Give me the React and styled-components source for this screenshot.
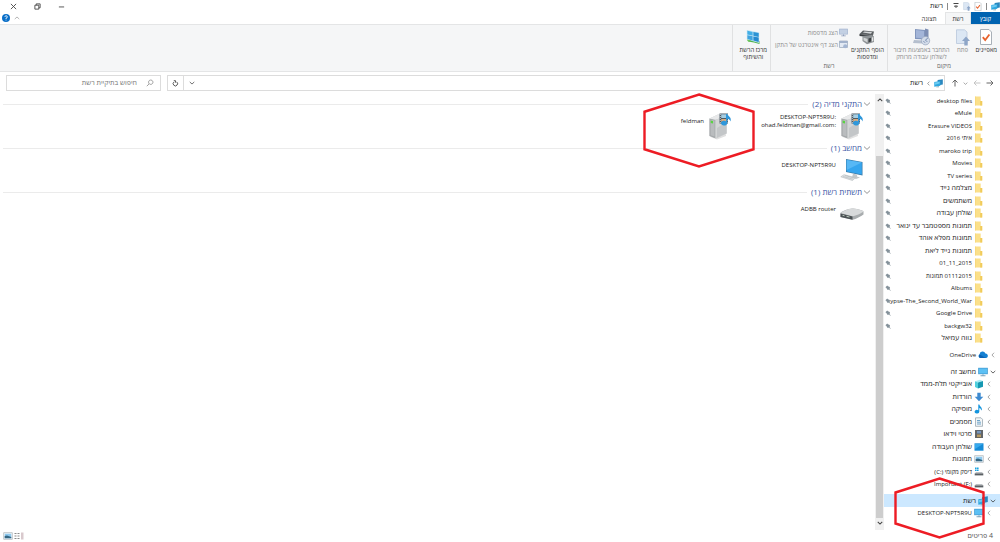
import React from 'react';
import styled, { createGlobalStyle } from 'styled-components';

const GlobalStyle = createGlobalStyle`
  * {
    box-sizing: border-box;
  }
  body {
    margin: 0;
    background: #fff;
    color: #222;
    font-family: 'Open Sans', 'Noto Sans', 'DejaVu Sans', sans-serif;
    font-size: 7px;
    line-height: 8px;
  }
  button, input {
    font: inherit;
    color: inherit;
    background: none;
    border: none;
    padding: 0;
    margin: 0;
  }
  svg {
    display: block;
    flex: none;
  }
`;

const Window = styled.div`
  display: flex;
  flex-direction: column;
  min-height: 100vh;
  overflow: hidden;
`;

const TitleBar = styled.header`
  display: flex;
  align-items: center;
  justify-content: space-between;
  height: 12px;
  padding-left: 8px;
`;

const QuickAccess = styled.div`
  display: flex;
  align-items: center;
  gap: 2px;
`;

const Divider = styled.span`
  width: 1px;
  height: 7px;
  margin: 0 2px;
  background: #8a8a8a;
`;

const WindowButtons = styled.div`
  display: flex;
  flex-direction: row-reverse;
  gap: 14px;
`;

const IconButton = styled.button`
  display: flex;
  align-items: center;
  justify-content: center;
  width: ${props => props.$width || 10}px;
  color: ${props => props.$color || '#444'};
`;

const TabBar = styled.nav`
  display: flex;
  align-items: stretch;
  height: 12px;
  font-size: 6px;
`;

const Tab = styled.button`
  width: ${props => (props.$file ? 29 : 26)}px;
  color: ${props => (props.$file ? '#fff' : '#333')};
  background: ${props => (props.$file ? '#0063b1' : props.$active ? '#f5f6f7' : 'none')};
  border: 1px solid ${props => (props.$file ? '#0063b1' : props.$active ? '#e4e5e6' : 'transparent')};
  border-bottom: none;
  margin-left: ${props => (props.$active ? 3 : 0)}px;
`;

const TabTools = styled.div`
  display: flex;
  align-items: center;
  gap: 2px;
  margin-right: auto;
  padding-left: 1px;
`;

const Ribbon = styled.section`
  display: flex;
  height: 48px;
  font-size: 6px;
  background: #f5f6f7;
  border-top: 1px solid #e4e5e6;
  border-bottom: 1px solid #e4e5e6;
`;

const Group = styled.div`
  display: flex;
  flex-direction: column;
  justify-content: space-between;
  width: ${props => props.$width}px;
  padding: 3px 3px 1px;
  border-left: 1px solid #e0e1e2;
`;

const GroupBody = styled.div`
  display: flex;
  align-items: flex-start;
  justify-content: flex-start;
  gap: 5px;
`;

const GroupLabel = styled.div`
  text-align: center;
  color: #666;
`;

const BigButton = styled.button`
  display: flex;
  flex-direction: column;
  align-items: center;
  gap: 1px;
  line-height: 7px;
  white-space: nowrap;
  color: ${props => (props.$muted ? '#8b8b8b' : '#333')};
`;

const BigIcon = styled.span`
  display: flex;
  align-items: center;
  height: 18px;
`;

const SmallButtons = styled.div`
  display: flex;
  flex-direction: column;
  gap: 3px;
  margin-right: -2px;
`;

const SmallButton = styled.button`
  display: flex;
  align-items: center;
  gap: 1px;
  white-space: nowrap;
  color: #8b8b8b;
`;

const AddressBar = styled.div`
  display: flex;
  align-items: center;
  gap: 6px;
  height: 22px;
  padding: 0 5px 0 6px;
`;

const Arrows = styled.div`
  display: flex;
  align-items: center;
  gap: 4px;
  width: 44px;
`;

const Address = styled.div`
  flex: 1;
  display: flex;
  align-items: center;
  gap: 3px;
  height: 16px;
  padding-right: 1px;
  border: 1px solid #dcdcdc;
`;

const AddressTools = styled.div`
  display: flex;
  align-self: stretch;
  margin-right: auto;

  button + button {
    border-right: 1px solid #dcdcdc;
  }
`;

const SearchBox = styled.label`
  display: flex;
  align-items: center;
  gap: 9px;
  width: 155px;
  height: 16px;
  padding: 0 6px;
  color: #8a8a8a;
  border: 1px solid #dcdcdc;

  input {
    flex: 1;
    min-width: 0;
    outline: none;
  }
  input::placeholder {
    color: #777;
    opacity: 1;
  }
`;

const Main = styled.div`
  flex: 1;
  display: flex;
`;

const Tree = styled.nav`
  width: 116px;
`;

const Branch = styled.ul`
  list-style: none;
  margin: 0 0 4px;
  padding: 0;
`;

const Row = styled.li`
  position: relative;
  height: 12px;
  background: ${props => (props.$selected ? '#cce8ff' : 'none')};

  &:nth-child(odd) {
    height: 13px;
  }
`;

const RowLink = styled.a`
  display: flex;
  align-items: center;
  gap: 2px;
  height: 100%;
  padding: 0 ${props => (props.$root ? 4 : 8)}px 0 1px;
  color: #222;
  text-decoration: none;
`;

const Slot = styled.span`
  display: flex;
  justify-content: center;
  width: ${props => props.$width}px;
`;

const Label = styled.span`
  flex: 1;
  min-width: 0;
  font-size: ${props => (props.$latin ? 6 : 7)}px;
  white-space: nowrap;
`;

const ScrollBar = styled.div`
  display: flex;
  flex-direction: column;
  align-items: stretch;
  width: 9px;
  padding: 1px 1px 2px;
  background: #f0f0f0;

  button {
    height: 10px;
  }
`;

const Track = styled.div`
  flex: 1;
  display: grid;
  grid-template-rows: 51fr 360fr;
`;

const Thumb = styled.div`
  grid-row: 2;
  background: #cdcdcd;
`;

const Content = styled.main`
  flex: 1;
  padding: 4px 4px 0 3px;
`;

const Section = styled.section`
  min-height: 44px;
`;

const SectionTitle = styled.h2`
  display: flex;
  align-items: center;
  gap: 1px;
  margin: 0;
  font-size: 8px;
  font-weight: 400;
  line-height: 12px;
  color: #3b55a5;

  &::after {
    content: '';
    flex: 1;
    height: 1px;
    margin-right: 3px;
    background: #ebebeb;
  }
`;

const Items = styled.div`
  display: flex;
  padding-right: 7px;
`;

const Item = styled.a`
  position: relative;
  display: flex;
  gap: 4px;
  width: 132px;
  height: 32px;
  color: #222;
  text-decoration: none;
`;

const ItemIcon = styled.span`
  display: flex;
  align-items: center;
  height: 32px;
`;

const ItemText = styled.span`
  display: flex;
  flex-direction: column;
  justify-content: center;
  height: 22px;
  font-size: 6px;
  white-space: nowrap;
`;

const StatusBar = styled.footer`
  display: flex;
  align-items: center;
  justify-content: space-between;
  height: 12px;
  padding: 0 7px 0 4px;
  color: #555;
`;

const ViewButtons = styled.div`
  display: flex;
  flex-direction: row-reverse;
  gap: 2px;
`;

// red markers drawn over the window
const Marker = styled.svg`
  position: absolute;
  z-index: 1;
  pointer-events: none;
  top: ${props => props.$top}px;
  right: ${props => props.$right}px;
`;

const Hexagon = ({ width, height, top, right }) => (
  <Marker $top={top} $right={right} width={width} height={height} viewBox={`0 0 ${width} ${height}`}>
    <path
      d={`M${width / 2} 1.5L${width - 1.5} ${height / 4}V${height * 0.75}L${width / 2} ${height - 1.5}L1.5 ${height * 0.75}V${height / 4}Z`}
      fill="none"
      stroke="#ed1c24"
      strokeWidth="2.4"
    />
  </Marker>
);

const Line = ({ d, size = 8, color = 'currentColor', weight = 1 }) => (
  <svg width={size} height={size} viewBox="0 0 8 8" fill="none" stroke={color} strokeWidth={weight}>
    <path d={d} />
  </svg>
);

const CHEVRON_LEFT = 'M5.4 1L2.6 4L5.4 7';
const CHEVRON_DOWN = 'M1 2.6L4 5.4L7 2.6';
const CHEVRON_UP = 'M1 5.4L4 2.6L7 5.4';

const NetworkIcon = ({ size = 10 }) => (
  <svg width={size} height={size} viewBox="0 0 10 10">
    <path d="M4 1.2L9.8 .3V6L4 7.2Z" fill="#2a86bd" />
    <path d="M.3 3.2L7 2.2V7.5L.3 8.7Z" fill="#2fa8e0" />
    <path d="M1 3.9L6.3 3.1V5L1 6.4Z" fill="#6ccbf2" />
    <path d="M2.5 8.5L5.5 8V9.3H2.5Z" fill="#7d98a7" />
  </svg>
);

const FolderIcon = () => (
  <svg width="9" height="10" viewBox="0 0 9 10">
    <path d="M1 .5H6.7V5H8.2V9.5H1Z" fill="#fbe08a" />
    <path d="M6.2 5H8.2V9.5H6.2Z" fill="#f1cb5a" />
    <path d="M1 .5H1.7V9.5H1Z" fill="#f5d678" />
  </svg>
);

const PinIcon = () => (
  <svg width="6" height="6" viewBox="0 0 6 6">
    <path d="M.4 2.2L2.2 .4L3 1.3L4.8 2L5 3.3L4.4 4L5.8 5.4L5.4 5.8L3.8 4.4L3 5L2.2 4.4L1.4 3Z" fill="#84919a" />
  </svg>
);

const CheckDoc = ({ width = 9, height = 10 }) => (
  <svg width={width} height={height} viewBox="0 0 12 16">
    <path d="M.5 .5H9L11.5 3V15.5H.5Z" fill="#fff" stroke="#a8b0b8" />
    <path d="M2.8 8.2L5.2 11L9.4 5.5" fill="none" stroke="#e8622c" strokeWidth="1.8" />
  </svg>
);

const OpenIcon = ({ width = 16, height = 17 }) => (
  <svg width={width} height={height} viewBox="0 0 15 17">
    <path d="M1 .8H9L11.5 3V14.5H1Z" fill="#dce7f4" stroke="#b7c7dc" strokeWidth=".8" />
    <path d="M10.5 7.5L14.5 12H12.2V16.5H8.8V12H6.5Z" fill="#8ea6c8" />
  </svg>
);

const RemoteIcon = () => (
  <svg width="18" height="18" viewBox="0 0 18 18">
    <path d="M2 1L12 2V11.5L2 11Z" fill="#8296bd" />
    <path d="M3 2L11 3V10.2L3 9.8Z" fill="#a3b5d8" />
    <path d="M12 .5L15.5 1.5V13H12Z" fill="#7e8fb4" />
    <path d="M1 12L10 12.5L9 15.5L0 15Z" fill="#b5bfce" />
    <circle cx="12.5" cy="12.7" r="4.2" fill="#d3dce9" stroke="#96a5bd" strokeWidth=".7" />
    <path d="M10.5 13.2L12 14.7M12.4 12L14.7 10.3M12.6 12.2L14.2 13.8" stroke="#7187ad" strokeWidth="1" />
  </svg>
);

const PrinterIcon = () => (
  <svg width="16" height="16" viewBox="0 0 16 16">
    <path d="M.5 5L4 1.5L15 2.5L14 6.5Z" fill="#5c6063" />
    <path d="M3.8 3.6L5.5 2.4L13 3.1L12 4.8Z" fill="#d5d8da" />
    <path d="M.5 5L14 6.5V8.5L.5 7Z" fill="#383c3f" />
    <path d="M3.5 7L12.5 6L15 7.5V13L8 15.2L3.5 12Z" fill="#8e9396" />
    <path d="M4.5 8.5L8.5 10V13.5L4.5 11.3Z" fill="#d2d5d6" />
    <path d="M9.5 9.5L12 8.8V12.6L9.5 13.5Z" fill="#3c4043" />
    <path d="M13 8.5L14.3 8.1V12L13 12.5Z" fill="#e6e7e8" />
  </svg>
);

const SharingIcon = () => (
  <svg width="15" height="16" viewBox="0 0 15 16">
    <path d="M4 9L13.5 12V15L8 13.5L2 12.5Z" fill="#4eb24c" />
    <path d="M.8 1L13.2 3.6V14L.8 10.5Z" fill="#bfe3f4" />
    <path d="M1.4 1.8L6.6 2.9V6.6L1.4 5.5Z" fill="#41aee6" />
    <path d="M7.4 3L12.7 4.1V7.9L7.4 6.8Z" fill="#2b93d4" />
    <path d="M1.4 6.2L6.6 7.3V11.4L1.4 9.9Z" fill="#3fa3df" />
    <path d="M7.4 7.5L12.7 8.6V13.1L7.4 11.6Z" fill="#2489cf" />
    <path d="M1 10.5L5 11.6L4 13L1.5 12Z" fill="#6cc65c" />
  </svg>
);

const ScreenIcon = ({ muted, size = 10 }) => (
  <svg width={size} height={size} viewBox="0 0 10 10">
    <path d="M.2 .8H9.8V7.2H.2Z" fill={muted ? '#9fb0cc' : '#3e98cf'} />
    <path d="M.9 1.5H9.1V6.5H.9Z" fill={muted ? '#c3d0e3' : '#5cc0f4'} />
    <path d="M2.5 8.2H7.5V9.2H2.5ZM4.5 7.2H5.5V8.2H4.5Z" fill={muted ? '#8b9cba' : '#7da3ba'} />
  </svg>
);

const WebPageIcon = () => (
  <svg width="9" height="9" viewBox="0 0 9 9">
    <path d="M.5 1H8.5V7.5H.5Z" fill="#e2e9f3" stroke="#a1aec2" strokeWidth=".8" />
    <path d="M.5 1H8.5V3H.5Z" fill="#a1b1cb" />
    <circle cx="6.2" cy="6.3" r="2" fill="#a3b5d2" />
  </svg>
);

const CloudIcon = () => (
  <svg width="10" height="10" viewBox="0 0 10 10">
    <path d="M2 8A2 2 0 0 1 1.6 4.3A3 3 0 0 1 7.4 3.5A2.3 2.3 0 0 1 8.2 8Z" fill="#1580d2" />
    <path d="M2 8A2 2 0 0 1 1.8 4.5L6 7L8 8Z" fill="#0b62b4" />
  </svg>
);

const CubeIcon = () => (
  <svg width="10" height="10" viewBox="0 0 10 10">
    <path d="M1 2.2L6 .7L9 2L4 3.6Z" fill="#a5ecf5" />
    <path d="M1 2.2L4 3.6V9.5L1 7.9Z" fill="#4fd0de" />
    <path d="M4 3.6L9 2V7.7L4 9.5Z" fill="#1598b2" />
  </svg>
);

const DownloadIcon = () => (
  <svg width="10" height="10" viewBox="0 0 10 10">
    <path d="M3.3 .8H6.7V4.8H9.3L5 9.2L.7 4.8H3.3Z" fill="#3d8ad0" />
  </svg>
);

const MusicIcon = () => (
  <svg width="10" height="10" viewBox="0 0 10 10">
    <path d="M4.3 .5H5.3C5.7 2.5 8.3 3 7.8 5.7L7 6.5C7.2 4.5 5.8 4.2 5.3 4V7.7A2.3 1.8 0 1 1 4.3 6.2Z" fill="#1495de" />
  </svg>
);

const DocumentIcon = () => (
  <svg width="10" height="10" viewBox="0 0 10 10">
    <path d="M1.5 .8H7L8.5 2.3V9.3H1.5Z" fill="#f3f6f8" stroke="#8e9ca6" strokeWidth=".7" />
    <path d="M3 3.5H6M3 5.2H7M3 7H7" stroke="#4e91bb" strokeWidth=".8" />
  </svg>
);

const VideoIcon = () => (
  <svg width="10" height="10" viewBox="0 0 10 10">
    <path d="M1 1H9V9H1Z" fill="#4b4f53" />
    <path d="M3 1.7H7V4.6H3Z" fill="#7796bb" />
    <path d="M3 5.4H7V8.3H3Z" fill="#b49a65" />
    <path d="M2 1.5V9M8 1.5V9" stroke="#d6d6d6" strokeWidth=".7" strokeDasharray="1 1" />
  </svg>
);

const DesktopIcon = () => (
  <svg width="10" height="10" viewBox="0 0 10 10">
    <path d="M.5 1.3H9.5V8.7H.5Z" fill="#168bd6" />
    <path d="M1 2H9L1 7Z" fill="#35a9ed" />
  </svg>
);

const PictureIcon = () => (
  <svg width="10" height="10" viewBox="0 0 10 10">
    <path d="M.7 1.7H9.3V8.3H.7Z" fill="#fff" stroke="#a5aeb3" strokeWidth=".7" />
    <path d="M1.7 2.7H8.3V7.3H1.7Z" fill="#8ec9ef" />
    <path d="M1.7 5L4 4.5L8.3 6V7.3H1.7Z" fill="#356783" />
  </svg>
);

const DiskIcon = ({ system }) => (
  <svg width="10" height="10" viewBox="0 0 10 10">
    {system && <path d="M1 .5H2.6V2.1H1ZM3 .5H4.6V2.1H3ZM1 2.5H2.6V4.1H1ZM3 2.5H4.6V4.1H3Z" fill="#18a3e1" />}
    <path d="M2 5H8L9.3 6.5H.7Z" fill="#bdc1c4" />
    <path d="M.7 6.4H9.3V8.4H.7Z" fill="#5a6064" />
  </svg>
);

const MediaIcon = () => (
  <svg width="24" height="28" viewBox="0 0 24 28">
    <path d="M2.5 25L9 27.5L18 24V22L9 25Z" fill="#e1e1e1" />
    <path d="M1.5 6.5L10 2.5L18.5 4V21.5L8 26.5L1.5 24Z" fill="#c5c8ca" />
    <path d="M1.5 6.5L7.5 7.8V26.3L1.5 24Z" fill="#a4a8aa" />
    <path d="M2.6 7.6L6.6 8.5V24.6L2.6 23.2Z" fill="#b9bcbe" />
    <path d="M1.5 6.5L10 2.5L18.5 4L7.5 7.8Z" fill="#e8e9ea" />
    <path d="M7.5 7.8L18.5 4V21.5L7.5 26.3Z" fill="#d3d5d6" />
    <path d="M9 16L18.5 10V21.5L9 25.6Z" fill="#c3c6c8" />
    <path d="M2.7 8.6L5 9.1V11.6L2.7 11Z" fill="#59d442" />
    <path d="M11.5 1.5H20V11.5H11.5Z" fill="#4c5b66" />
    <path d="M13.2 2.3H18.3V6H13.2Z" fill="#a5cde2" />
    <path d="M13.2 7H18.3V10.6H13.2Z" fill="#d8ab80" />
    <path d="M12.3 2V11.5M19.2 2V11.5" stroke="#dfe3e6" strokeWidth=".8" strokeDasharray="1 1" />
    <path d="M18 2H19.3C20 4.5 24 5 22.5 9.5C22 7.5 20.5 7 19.3 6.8V11A3.2 2.4 0 1 1 18 9.2Z" fill="#2f97da" />
  </svg>
);

const ComputerIcon = () => (
  <svg width="24" height="24" viewBox="0 0 24 24">
    <path d="M6 1L22.5 4V17.5L6 14Z" fill="#3a7ba8" />
    <path d="M6.7 1.9L21.8 4.6V16.5L6.7 13.4Z" fill="#35a5ee" />
    <path d="M6.7 1.9L21.8 4.6L6.7 12Z" fill="#57b8f5" />
    <path d="M13 15.7L17 16.5V18.5L20 19.5L16 21L12 19.5Z" fill="#c3c8cb" />
    <path d="M.8 18.8L4 16.7L15.5 19.7L12.5 22.5Z" fill="#dfe2e4" stroke="#b4babd" strokeWidth=".6" />
    <path d="M3 18.5L13 21.2M5 17.5L14 20" stroke="#a9b0b4" strokeWidth=".5" />
  </svg>
);

const RouterIcon = () => (
  <svg width="24" height="14" viewBox="0 0 24 14">
    <path d="M.5 6C.5 4.5 9 1.5 12 1.5S23.5 3 23.5 4.5V7.5C21 9.5 16 12 12.5 12.8L.5 10Z" fill="#a8acae" />
    <path d="M.5 6C2 4.5 9 1.5 12 1.5S22.5 3 23.5 4.5C21 6.5 16 8.8 12.5 9.3Z" fill="#d8dadb" />
    <path d="M.5 6.4L12.5 9.5V12.8L.5 10Z" fill="#4b5154" />
    <path d="M2.5 8.3L4.5 8.8M6.5 9.3L9.5 10" stroke="#d3e2d2" strokeWidth=".8" />
  </svg>
);

const folders = [
  'desktop files',
  'eMule',
  'Erasure VIDEOS',
  'איתי 2016',
  'maroko trip',
  'Movies',
  'TV series',
  'מצלמה נייד',
  'משתמשים',
  'שולחן עבודה',
  'תמונות מספטמבר עד ינואר',
  'תמונות מפלא אוהד',
  'תמונות נייד ליאת',
  '01_11_2015',
  '01112015 תמונות',
  'Albums',
  'ypse-The_Second_World_War',
  'Google Drive',
  'backgw32',
  'נווה עמיאל',
];

const computer = [
  { name: 'מחשב זה', icon: <ScreenIcon />, root: true, open: true },
  { name: 'אובייקטי תלת-ממד', icon: <CubeIcon /> },
  { name: 'הורדות', icon: <DownloadIcon /> },
  { name: 'מוסיקה', icon: <MusicIcon /> },
  { name: 'מסמכים', icon: <DocumentIcon /> },
  { name: 'סרטי וידאו', icon: <VideoIcon /> },
  { name: 'שולחן העבודה', icon: <DesktopIcon /> },
  { name: 'תמונות', icon: <PictureIcon /> },
  { name: 'דיסק מקומי \u200e(C:)\u200e', icon: <DiskIcon system /> },
  { name: 'Important (F:)', icon: <DiskIcon /> },
];

// latin letters and digits run wider than the hebrew ones
const Name = ({ children }) => (
  <Label $latin={/[a-z0-9]/i.test(children)}>
    <bdi>{children}</bdi>
  </Label>
);

const TreeRow = ({ name, icon, root, open, selected, children }) => (
  <Row $selected={selected}>
    <RowLink href="#" $root={root}>
      <Slot $width={6}>
        <Line d={open ? CHEVRON_DOWN : CHEVRON_LEFT} size={6} color={open ? '#333' : '#888'} />
      </Slot>
      {icon}
      <Name>{name}</Name>
    </RowLink>
    {children}
  </Row>
);

const Heading = ({ children }) => (
  <SectionTitle>
    <Line d={CHEVRON_DOWN} size={8} color="#777" weight={0.8} />
    {children}
  </SectionTitle>
);

const App = () => (
  <Window dir="rtl" lang="he">
    <GlobalStyle />
    <TitleBar>
      <QuickAccess>
        <NetworkIcon size={9} />
        <Divider />
        <CheckDoc width={8} height={9} />
        <OpenIcon width={10} height={9} />
        <IconButton $width={8} aria-label="התאמה אישית">
          <Line d="M1.5 1.5H6.5M2.5 4L4 5.5L5.5 4Z" size={8} />
        </IconButton>
        <Divider />
        <span>רשת</span>
      </QuickAccess>
      <WindowButtons>
        <IconButton aria-label="סגור">
          <Line d="M1 1L7 7M7 1L1 7" size={7} />
        </IconButton>
        <IconButton aria-label="שחזר">
          <Line d="M1 2.5H5.5V7H1ZM2.5 2.5V1H7V5.5H5.5" size={7} />
        </IconButton>
        <IconButton aria-label="מזער">
          <Line d="M1 4.5H7" size={7} />
        </IconButton>
      </WindowButtons>
    </TitleBar>

    <TabBar>
      <Tab $file>קובץ</Tab>
      <Tab $active>רשת</Tab>
      <Tab>תצוגה</Tab>
      <TabTools>
        <IconButton aria-label="מזער רצועה" $color="#999">
          <Line d={CHEVRON_UP} size={6} />
        </IconButton>
        <IconButton aria-label="עזרה" $width={9}>
          <svg width="8" height="8" viewBox="0 0 8 8">
            <circle cx="4" cy="4" r="4" fill="#0a6fc8" />
            <path d="M2.9 2.9A1.2 1.2 0 1 1 4 4.1V5M4 5.7V6.5" fill="none" stroke="#fff" strokeWidth=".8" />
          </svg>
        </IconButton>
      </TabTools>
    </TabBar>

    <Ribbon>
      <Group $width={113}>
        <GroupBody>
          <BigButton>
            <BigIcon>
              <CheckDoc width={12} height={16} />
            </BigIcon>
            מאפיינים
          </BigButton>
          <BigButton $muted>
            <BigIcon>
              <OpenIcon />
            </BigIcon>
            פתח
          </BigButton>
          <BigButton $muted>
            <BigIcon>
              <RemoteIcon />
            </BigIcon>
            <span>
              התחבר באמצעות חיבור
              <br />
              לשולחן עבודה מרוחק
            </span>
          </BigButton>
        </GroupBody>
        <GroupLabel>מיקום</GroupLabel>
      </Group>
      <Group $width={117}>
        <GroupBody>
          <BigButton>
            <BigIcon>
              <PrinterIcon />
            </BigIcon>
            <span>
              הוסף התקנים
              <br />
              ומדפסות
            </span>
          </BigButton>
          <SmallButtons>
            <SmallButton>
              <ScreenIcon muted size={9} />
              הצג מדפסות
            </SmallButton>
            <SmallButton>
              <WebPageIcon />
              הצג דף אינטרנט של התקן
            </SmallButton>
          </SmallButtons>
        </GroupBody>
        <GroupLabel>רשת</GroupLabel>
      </Group>
      <Group $width={38}>
        <GroupBody>
          <BigButton>
            <BigIcon>
              <SharingIcon />
            </BigIcon>
            <span>
              מרכז הרשת
              <br />
              והשיתוף
            </span>
          </BigButton>
        </GroupBody>
      </Group>
    </Ribbon>

    <AddressBar>
      <Arrows>
        <IconButton aria-label="אחורה" $color="#666">
          <Line d="M.5 4H7M4.5 1.5L7 4L4.5 6.5" />
        </IconButton>
        <IconButton aria-label="קדימה" $color="#c4c4c4">
          <Line d="M7.5 4H1M3.5 1.5L1 4L3.5 6.5" />
        </IconButton>
        <IconButton aria-label="מיקומים אחרונים" $width={5} $color="#777">
          <Line d={CHEVRON_DOWN} size={5} />
        </IconButton>
        <IconButton aria-label="למעלה" $width={8} $color="#666">
          <Line d="M4 7.5V1M1.5 3.5L4 1L6.5 3.5" />
        </IconButton>
      </Arrows>
      <Address>
        <NetworkIcon size={9} />
        <Line d={CHEVRON_LEFT} size={5} color="#666" />
        <span>רשת</span>
        <AddressTools>
          <IconButton aria-label="הצג כתובות" $width={15}>
            <Line d={CHEVRON_DOWN} size={6} />
          </IconButton>
          <IconButton aria-label="רענן" $width={16}>
            <Line d="M5 2A2.5 2.5 0 1 1 2.4 2.2M2 .8H4V3" size={7} />
          </IconButton>
        </AddressTools>
      </Address>
      <SearchBox>
        <Line d="M4.8 1A2.2 2.2 0 1 1 4.7 1M3.2 4.8L.8 7.2" weight={0.8} />
        <input type="search" aria-label="חיפוש" placeholder="חיפוש בתיקיית רשת" />
      </SearchBox>
    </AddressBar>

    <Main>
      <Tree>
        <Branch>
          {folders.map((name, i) => (
            <Row key={name}>
              <RowLink href="#">
                <Slot $width={7} />
                <FolderIcon />
                <Name>{name}</Name>
                {i < folders.length - 1 && <PinIcon />}
              </RowLink>
            </Row>
          ))}
        </Branch>
        <Branch>
          <TreeRow name="OneDrive" icon={<CloudIcon />} root />
        </Branch>
        <Branch>
          {computer.map(item => (
            <TreeRow key={item.name} {...item} />
          ))}
        </Branch>
        <Branch>
          <TreeRow name="רשת" icon={<NetworkIcon />} root open selected>
            <Hexagon width={91} height={62} top={-17} right={15} />
          </TreeRow>
          <TreeRow name="DESKTOP-NPT5R9U" icon={<ScreenIcon />} />
        </Branch>
      </Tree>

      <ScrollBar>
        <IconButton aria-label="גלול למעלה" $width={7}>
          <Line d={CHEVRON_UP} size={6} weight={1.4} />
        </IconButton>
        <Track>
          <Thumb />
        </Track>
        <IconButton aria-label="גלול למטה" $width={7}>
          <Line d={CHEVRON_DOWN} size={6} weight={1.4} />
        </IconButton>
      </ScrollBar>

      <Content>
        <Section>
          <Heading>התקני מדיה (2)</Heading>
          <Items>
            <Item href="#">
              <ItemIcon>
                <MediaIcon />
              </ItemIcon>
              <ItemText>
                <span>{'DESKTOP-NPT5R9U:\u200e'}</span>
                <span>{'ohad.feldman@gmail.com:\u200e'}</span>
              </ItemText>
            </Item>
            <Item href="#">
              <ItemIcon>
                <MediaIcon />
              </ItemIcon>
              <ItemText>feldman</ItemText>
              <Hexagon width={112} height={75} top={-17} right={-23} />
            </Item>
          </Items>
        </Section>
        <Section>
          <Heading>מחשב (1)</Heading>
          <Items>
            <Item href="#">
              <ItemIcon>
                <ComputerIcon />
              </ItemIcon>
              <ItemText>DESKTOP-NPT5R9U</ItemText>
            </Item>
          </Items>
        </Section>
        <Section>
          <Heading>תשתית רשת (1)</Heading>
          <Items>
            <Item href="#">
              <ItemIcon>
                <RouterIcon />
              </ItemIcon>
              <ItemText>ADBB router</ItemText>
            </Item>
          </Items>
        </Section>
      </Content>
    </Main>

    <StatusBar>
      <span>4 פריטים</span>
      <ViewButtons>
        <IconButton aria-label="סמלים גדולים" $width={8}>
          <PictureIcon />
        </IconButton>
        <IconButton aria-label="פרטים">
          <svg width="10" height="8" viewBox="0 0 10 8">
            <path d="M.5 1.5H2.5M3.5 1.5H5.5M.5 4H2.5M3.5 4H5.5M.5 6.5H2.5M3.5 6.5H5.5" stroke="#8b8b8b" />
            <path d="M7 .5H9.5V7.5H7Z" fill="#d9c9cd" />
          </svg>
        </IconButton>
      </ViewButtons>
    </StatusBar>
  </Window>
);

export default App;
